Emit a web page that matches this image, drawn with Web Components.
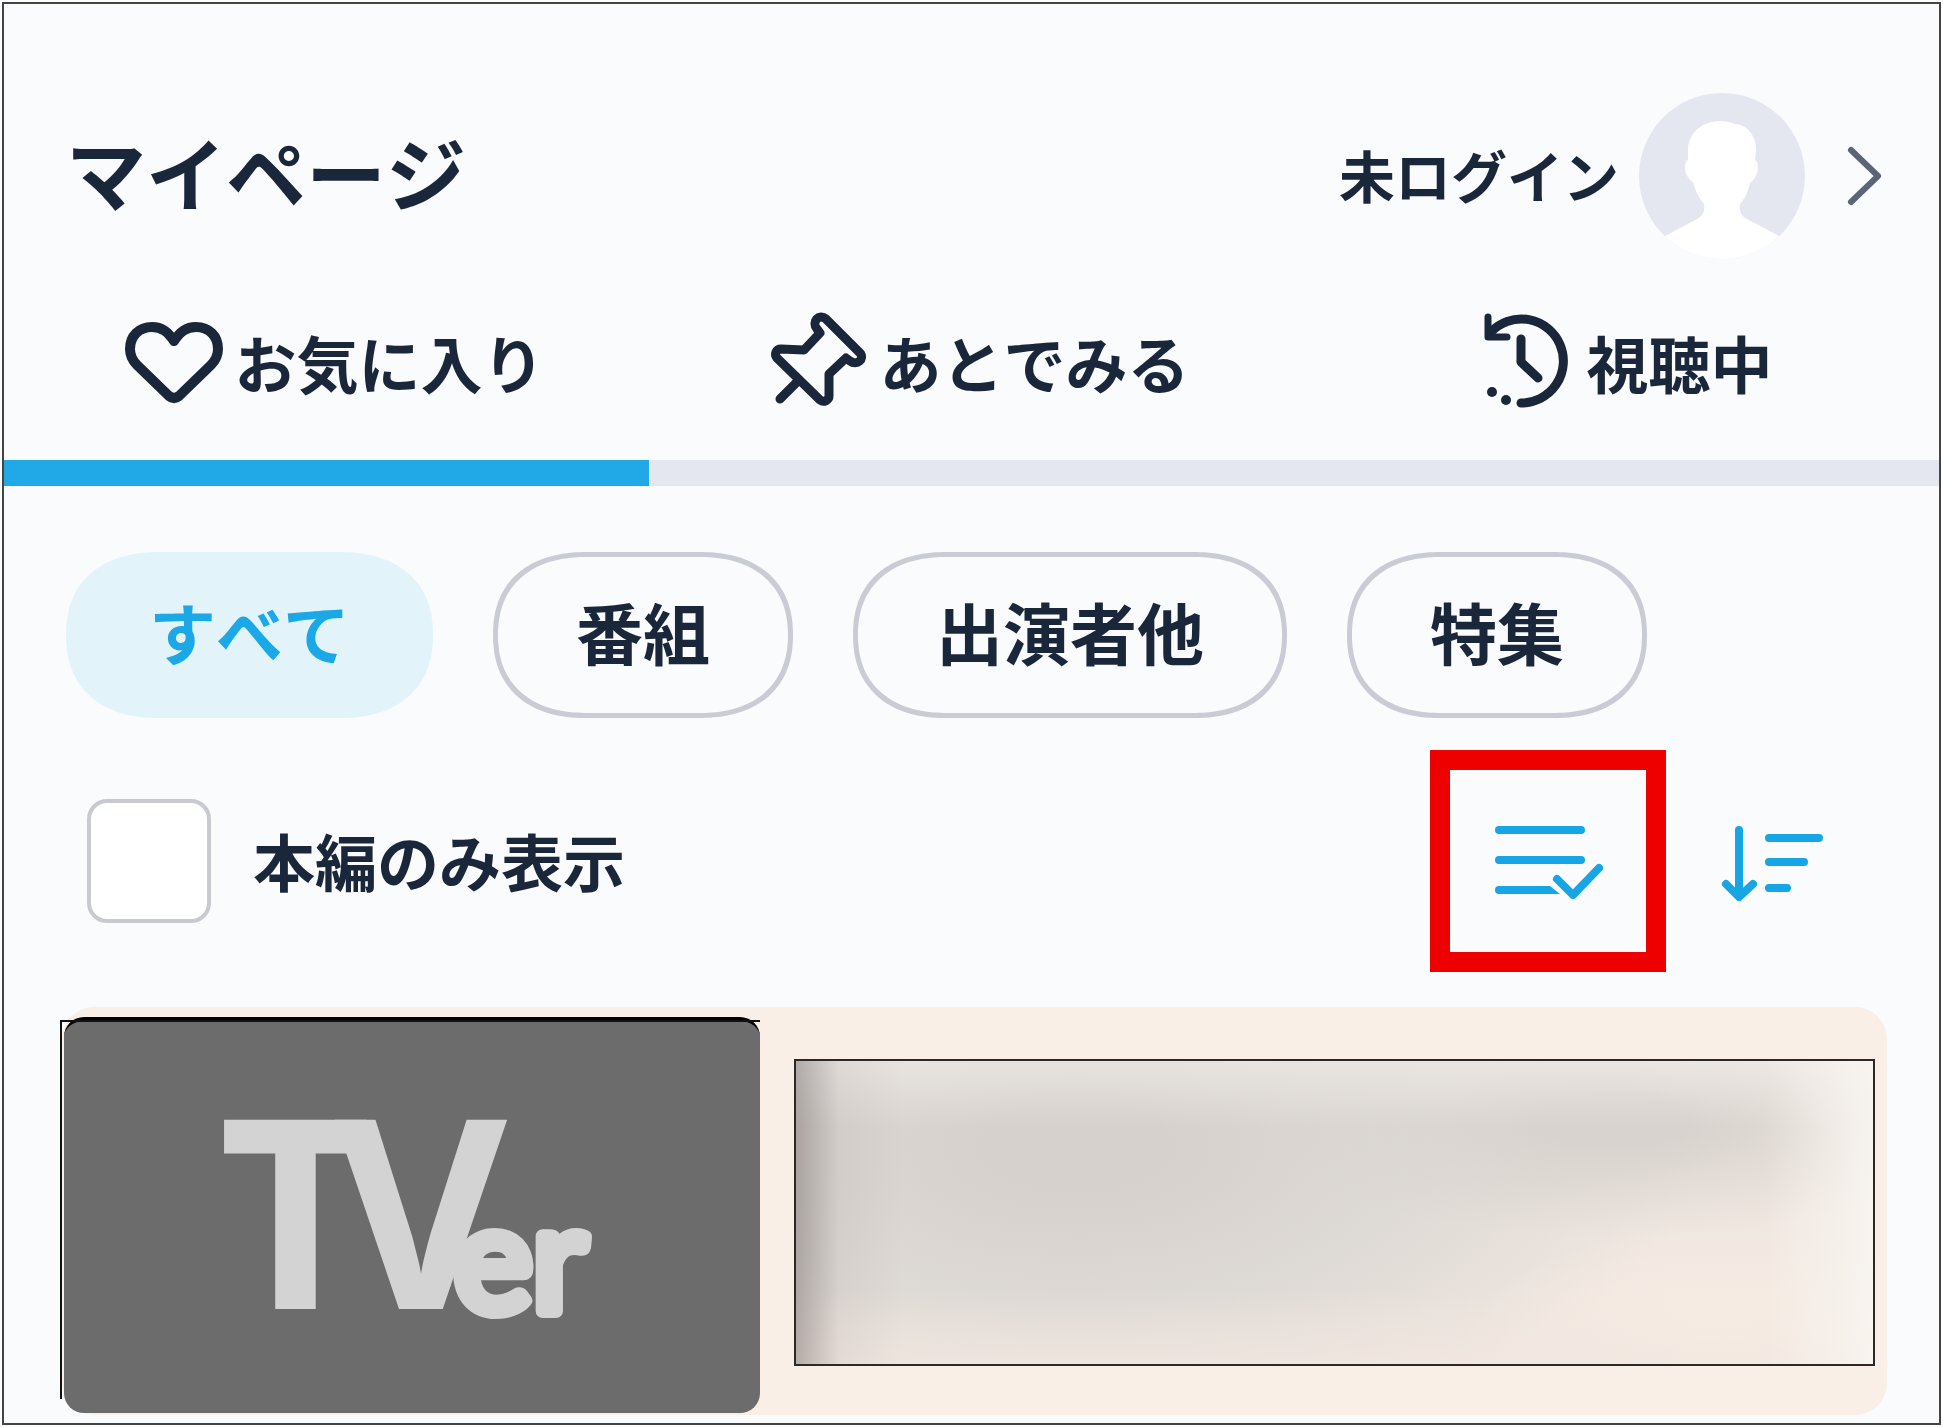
<!DOCTYPE html>
<html lang="ja">
<head>
<meta charset="utf-8">
<meta name="viewport" content="width=device-width, initial-scale=1">
<title>マイページ</title>
<style>
  body {
    margin: 0;
    padding: 2px;
    background: #fff;
    color: #1a2639;
    font-family: "Noto Sans CJK JP", sans-serif;
    font-weight: 700;
    font-kerning: none;
  }
</style>
</head>
<body>

<my-page>
  <page-header slot="header" user="未ログイン">マイページ</page-header>
  <tab-bar slot="tabs">
    <tab-item icon="heart" active>お気に入り</tab-item>
    <tab-item icon="pin">あとでみる</tab-item>
    <tab-item icon="history">視聴中</tab-item>
  </tab-bar>
  <chip-list>
    <filter-chip active>すべて</filter-chip>
    <filter-chip>番組</filter-chip>
    <filter-chip>出演者他</filter-chip>
    <filter-chip>特集</filter-chip>
  </chip-list>
  <list-tools>本編のみ表示</list-tools>
  <program-card></program-card>
</my-page>

<script>
// ICONS
// inner markup of every icon, with the matching view box
const icons = {
  heart: {
    box: '0 0 100 100',
    stroke: 10,
    body: '<path d="M50 28C44 19 38 14 28 14C15 14 6 23 6 36C6 43 9 48 13 52L45 83Q50 87 55 83L87 52C91 48 94 43 94 36C94 23 85 14 72 14C62 14 56 19 50 28Z"/>',
  },
  pin: {
    box: '0 0 100 100',
    stroke: 9,
    body: '<path d="M57 6C50 0 42 9 48 16L51 20L35 37L12 36C7 36 5 41 8 45L51 87C55 90 60 87 60 83V61L77 45L81 48C88 53 96 46 91 40Z"/><path d="M30 67L11 86"/>',
  },
  history: {
    box: '0 0 100 100',
    stroke: 9,
    body: '<path d="M15 19A42 42 0 1 1 45 90"/><path stroke-width="7" d="M12 4V24H31"/><path d="M45 26V49L62 65"/><circle cx="16" cy="79" r="5" fill="currentColor" stroke="none"/><circle cx="30" cy="87" r="5" fill="currentColor" stroke="none"/>',
  },
  chevron: {
    box: '0 0 40 64',
    stroke: 6,
    body: '<path d="M6 6L33 32L6 58"/>',
  },
  check: {
    box: '0 0 112 80',
    stroke: 8,
    body: '<path d="M7 9H89M7 39H89"/><path stroke="none" fill="currentColor" d="M7 65H58L68 73H7A4 4 0 0 1 7 65Z"/><path d="M65 58L81 74L107 47"/>',
  },
  sort: {
    box: '0 0 104 80',
    stroke: 8,
    body: '<path d="M19 9V74M6 63L19 76L33 63M49 17H99M49 41H84M49 67H67"/>',
  },
};

const drawIcon = (name) => {
  const { box, stroke, body } = icons[name];
  const [, , width, height] = box.split(' ');
  return `<svg width="${width}" height="${height}" viewBox="${box}" fill="none" stroke="currentColor" stroke-width="${stroke}" stroke-linecap="round" stroke-linejoin="round" aria-hidden="true">${body}</svg>`;
};


// PAGE FRAME
class MyPage extends HTMLElement {
  connectedCallback() {
    this.attachShadow({ mode: 'open' }).innerHTML = `
<style>
  :host {
    display: block;
    border: 2px solid #444;
    background: #fafbfd;
  }
  main {
    display: flow-root;
    padding: 66px 52px 8px 58px;
  }
</style>
<slot name="header"></slot>
<slot name="tabs"></slot>
<main><slot></slot></main>`;
  }
}
customElements.define('my-page', MyPage);


// HEADER
class PageHeader extends HTMLElement {
  connectedCallback() {
    this.attachShadow({ mode: 'open' }).innerHTML = `
<style>
  :host { display: block; }
  header {
    display: flex;
    align-items: center;
    justify-content: space-between;
    padding: 89px 54px 0 62px;
  }
  h1 {
    margin: 0;
    padding-bottom: 12px;
    font-size: 80px;
    line-height: 100px;
  }
  a {
    display: flex;
    align-items: center;
    color: inherit;
    font-size: 56px;
    line-height: 80px;
    text-decoration: none;
  }
  .user { padding-bottom: 4px; }
  .avatar { margin: 0 40px 0 20px; }
  .arrow {
    display: flex;
    color: #5a6578;
  }
</style>
<header>
  <h1><slot></slot></h1>
  <a href="#login">
    <span class="user">${this.getAttribute('user')}</span>
    <svg class="avatar" width="166" height="166" viewBox="0 0 166 166" aria-hidden="true">
      <clipPath id="round"><circle cx="83" cy="83" r="83"/></clipPath>
      <g clip-path="url(#round)">
        <path fill="#e5e7f0" d="M0 0H166V166H0Z"/>
        <path fill="#fff" d="M80 28C61 29 49 41 49 58V67C44 69 45 84 54 89C56 97 59 104 65 111C66 117 65 121 60 125L26 143L0 166H166L140 143L106 125C101 121 100 117 101 111C107 104 109 98 111 90C120 84 121 69 116 67L117 57C117 43 109 32 96 31C91 29 87 28 80 28Z"/>
      </g>
    </svg>
    <span class="arrow">${drawIcon('chevron')}</span>
  </a>
</header>`;
  }
}
customElements.define('page-header', PageHeader);


// TABS
class TabBar extends HTMLElement {
  connectedCallback() {
    this.attachShadow({ mode: 'open' }).innerHTML = `
<style>
  :host { display: block; }
  nav {
    display: grid;
    grid-template-columns: repeat(3, 1fr);
  }
</style>
<nav><slot></slot></nav>`;
  }
}
customElements.define('tab-bar', TabBar);

class TabItem extends HTMLElement {
  connectedCallback() {
    this.attachShadow({ mode: 'open' }).innerHTML = `
<style>
  :host { display: block; }
  button {
    display: flex;
    align-items: center;
    justify-content: center;
    gap: 10px;
    box-sizing: border-box;
    width: 100%;
    padding: 54px 0 47px 16px;
    border: 0;
    border-bottom: 26px solid #e5e7f0;
    background: none;
    color: inherit;
    font: inherit;
    font-kerning: inherit;
    font-size: 62px;
    line-height: 90px;
  }
  :host([active]) button { border-bottom-color: #20a9e6; }
  svg { overflow: visible; }
  span { padding-bottom: 2px; }
</style>
<button type="button">${drawIcon(this.getAttribute('icon'))}<span><slot></slot></span></button>`;
  }
}
customElements.define('tab-item', TabItem);


// FILTER CHIPS
class ChipList extends HTMLElement {
  connectedCallback() {
    this.attachShadow({ mode: 'open' }).innerHTML = `
<style>
  :host {
    display: flex;
    flex-wrap: wrap;
    gap: 60px;
    padding-left: 4px;
  }
</style>
<slot></slot>`;
  }
}
customElements.define('chip-list', ChipList);

class FilterChip extends HTMLElement {
  connectedCallback() {
    this.attachShadow({ mode: 'open' }).innerHTML = `
<style>
  :host { display: block; }
  button {
    display: block;
    padding: 29px 78px 37px;
    border: 5px solid #c9ccd4;
    border-radius: 94px / 83px;
    corner-shape: superellipse(1.2);
    background: none;
    color: inherit;
    font: inherit;
    font-kerning: none;
    font-size: 67px;
    line-height: 90px;
  }
  :host([active]) button {
    border-color: #e3f3fa;
    background: #e3f3fa;
    color: #1ba8e6;
  }
</style>
<button type="button"><slot></slot></button>`;
  }
}
customElements.define('filter-chip', FilterChip);


// LIST TOOLS
// tick box on the left, edit and sort buttons on the right
class ListTools extends HTMLElement {
  connectedCallback() {
    this.attachShadow({ mode: 'open' }).innerHTML = `
<style>
  :host {
    display: flex;
    align-items: center;
    margin: 32px 0 35px;
    padding: 0 63px 0 25px;
  }
  label {
    display: flex;
    align-items: center;
    gap: 42px;
    margin-right: auto;
    font-size: 62px;
    line-height: 90px;
  }
  label span { padding-bottom: 2px; }
  input {
    appearance: none;
    box-sizing: border-box;
    width: 124px;
    height: 124px;
    margin: 0;
    border: 4px solid #c9cad0;
    border-radius: 20px;
    background: #fff;
  }
  button {
    display: flex;
    align-items: center;
    justify-content: center;
    padding: 0;
    border: 0;
    background: none;
    color: #16a6e6;
  }
  .edit {
    box-sizing: border-box;
    width: 236px;
    height: 222px;
    margin-right: 54px;
    border: 20px solid #ef0000;
  }
</style>
<label><input type="checkbox"><span><slot></slot></span></label>
<button class="edit" type="button" aria-label="編集">${drawIcon('check')}</button>
<button type="button" aria-label="並び替え">${drawIcon('sort')}</button>`;
  }
}
customElements.define('list-tools', ListTools);


// PROGRAM CARD
class ProgramCard extends HTMLElement {
  connectedCallback() {
    this.attachShadow({ mode: 'open' }).innerHTML = `
<style>
  :host {
    display: grid;
    grid-template-columns: 698fr 1081fr;
    gap: 34px;
    padding: 10px 12px 2px 0;
    border-radius: 32px;
    background: #f9efe6;
  }
  .thumb {
    position: relative;
    box-sizing: border-box;
    aspect-ratio: 696 / 396;
    margin-left: 2px;
    border-top: 4px solid #000;
    border-radius: 20px;
    background: #6c6c6c;
  }
  /* hairline along the top and left edges */
  .thumb::before {
    content: "";
    position: absolute;
    inset: -1px 0 14px -4px;
    border: solid #111;
    border-width: 2px 0 0 2px;
  }
  .thumb svg {
    display: block;
    width: 100%;
    height: 100%;
  }
  .info {
    margin: 42px 0 47px;
    border: 2px solid #2b2826;
    background:
      linear-gradient(90deg, rgba(110, 100, 100, .45), rgba(150, 140, 140, .12) 4%, transparent 10%),
      linear-gradient(270deg, rgba(248, 245, 240, .9), transparent 10%),
      linear-gradient(180deg, rgba(240, 237, 233, .6), transparent 22%),
      linear-gradient(0deg, rgba(242, 230, 224, .7), transparent 24%),
      radial-gradient(ellipse 24% 40% at 86% 94%, #f8eee4, transparent),
      radial-gradient(ellipse 34% 38% at 76% 20%, #d8d3ce 20%, transparent),
      radial-gradient(ellipse 58% 100% at 26% 28%, #d6d1cc 15%, #dedad5 55%, transparent),
      #f1e7e1;
  }
</style>
<div class="thumb">
  <svg viewBox="0 0 696 392" fill="#d3d3d3">
    <text x="155" y="288" font-family="Noto Sans, sans-serif" font-size="265" font-weight="700">T<tspan dx="-37">V</tspan><tspan x="390" y="290" font-family="Lato, sans-serif" font-size="148" font-weight="400" stroke="#d3d3d3" stroke-width="14" stroke-linejoin="round">er</tspan></text>
  </svg>
</div>
<div class="info"></div>`;
  }
}
customElements.define('program-card', ProgramCard);
</script>
</body>
</html>
